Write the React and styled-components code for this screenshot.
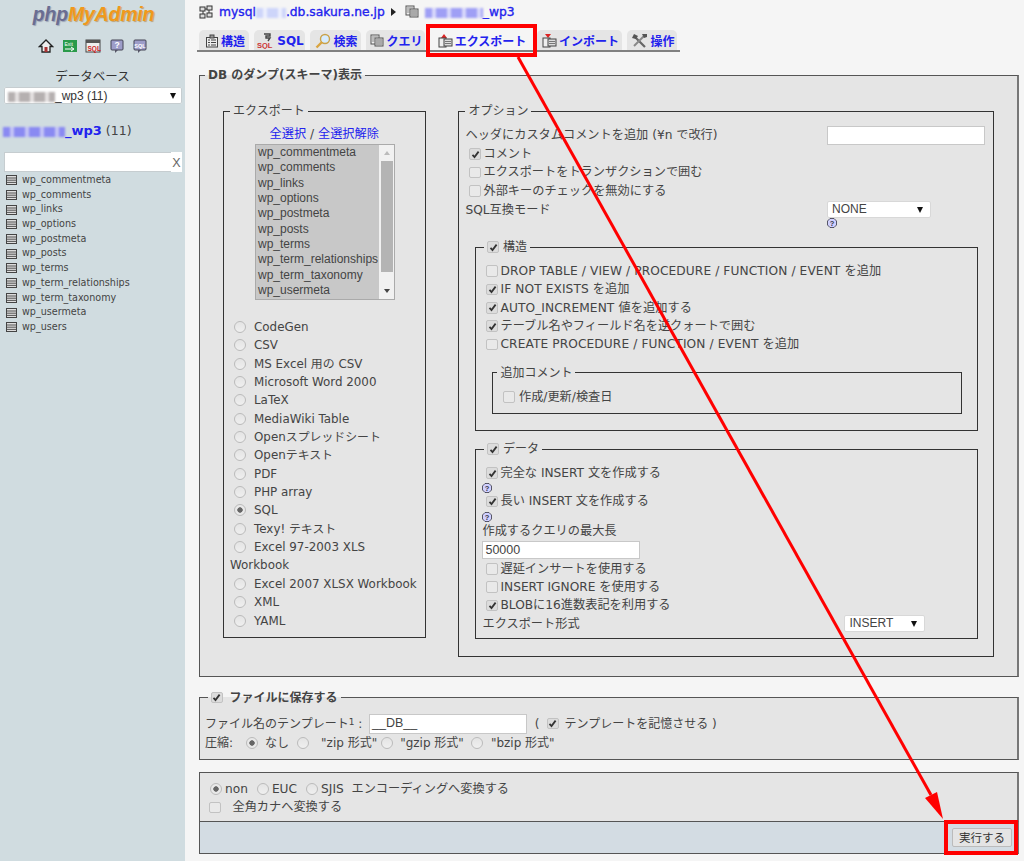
import React from 'react';
import styled, { createGlobalStyle, css } from 'styled-components';

const Global = createGlobalStyle`
  html, body { margin: 0; padding: 0; height: 861px; overflow: hidden; background: #f5f5f5; }
  * { box-sizing: border-box; }
  body { font-family: "DejaVu Sans", "Noto Sans CJK JP", sans-serif; font-size: 12.2px; color: #444; }
`;

const Page = styled.div`
  position: relative; width: 1024px; height: 861px; display: flex; overflow: hidden;
`;

/* ---------- sidebar ---------- */
const Sidebar = styled.aside`
  width: 185px; height: 861px; flex: none; background: #d0dce0; display: flex; flex-direction: column;
`;
const Logo = styled.div`
  height: 36px; padding: 1px 0 0 2px; text-align: center; font: italic bold 19.5px/26px "Liberation Sans", sans-serif;
  letter-spacing: -0.2px; color: #6a6d92; text-shadow: 1px 1px 1px #9aa3b5;
  b { color: #f0991c; font-weight: bold; text-shadow: 1px 1px 1px #b9a27a; }
`;
const NavIcons = styled.div`
  height: 18px; margin-top: 1px; display: flex; padding-left: 38px; gap: 7.5px; align-items: center;
`;
const DbLabel = styled.div`
  margin-top: 12px; text-align: center; font-size: 12.5px; line-height: 20px; color: #333;
`;
const SideSelect = styled.div`
  margin: 0 3px 0 4px; height: 17px; background: #fff; border-radius: 2px; box-shadow: 0 0 0 1px #c6cdd0 inset;
  display: flex; align-items: center; justify-content: space-between; color: #333; padding: 0 6px 0 4px;
  font-family: "Liberation Sans", sans-serif; font-size: 12px;
`;
const Mosaic = styled.span`
  display: inline-block; vertical-align: -2px; height: ${p => p.$h || 10}px; width: ${p => p.$w}px; filter: blur(1px);
  background: repeating-linear-gradient(90deg, ${p => p.$c} 0 7px, ${p => p.$d} 7px 11px, ${p => p.$c} 11px 15px);
`;
const DbHead = styled.div`
  margin: 17px 0 0 3px; height: 20px; line-height: 20px; font-size: 12.5px; color: #444;
  a { color: #2222ee; font-weight: bold; text-decoration: none; font-size: 13px; }
`;
const FilterRow = styled.div`
  margin: 11px 3px 0 4px; height: 20px; display: flex; background: #fff; box-shadow: 0 0 0 1px #c6cdd0 inset;
  span { margin-left: auto; width: 11px; background: #fff; color: #666; font: 12.5px/22px "Liberation Sans", sans-serif; text-align: center; }
`;
const SideList = styled.ul`
  list-style: none; margin: 1px 0 0; padding: 0 0 0 6px;
`;
const SideItem = styled.li`
  height: 14.7px; line-height: 14.7px; display: flex; align-items: center; gap: 5px; font-size: 9.6px; color: #444;
`;

/* ---------- main ---------- */
const Main = styled.main`
  flex: 1; min-width: 0; padding: 0 5px 0 14px; display: flex; flex-direction: column;
`;
const Crumbs = styled.div`
  height: 30px; padding-bottom: 6px; display: flex; align-items: center; gap: 6px; font-size: 12.3px; color: #2222ee;
  -webkit-text-stroke: .35px #2222ee;
`;
const TabBar = styled.nav`
  display: flex; gap: 5px; height: 22px; width: 483px; margin-left: -2px; padding-left: 2px; border-bottom: 2px solid #808080;
`;
const Tab = styled.a`
  height: 20px; width: ${p => p.$w}px; flex: none; display: flex; align-items: center; justify-content: center; gap: 2px; padding: 1px 0 0 2px;
  border-radius: 5px 5px 0 0; font-size: 12px; font-weight: bold; color: #2222ee; white-space: nowrap;
  background: ${p => p.$active ? '#f5f5f5' : '#e5e5e5'};
`;

const Field = styled.fieldset`
  margin: ${p => p.$m || '0'}; padding: ${p => p.$p || '0'}; min-width: 0; min-inline-size: 0;
  height: ${p => p.$h}px; ${p => p.$w && css`width: ${p.$w}px;`}
  border: 1px solid ${p => p.$dark ? '#333' : '#555'}; background: ${p => p.$bare ? 'transparent' : '#e5e5e5'};
  ${p => p.$edge && 'border-right: 2px solid #777;'}
`;
const Legend = styled.legend`
  margin-left: ${p => p.$ml ?? 6}px; padding: 0 3px; height: 18px; line-height: 18px; font-size: 12px; color: #444;
  font-weight: ${p => p.$bold ? 'bold' : 'normal'}; display: flex; align-items: center; gap: 4px; background: transparent;
`;
const Columns = styled.div`
  display: flex; gap: 32px; align-items: flex-start;
`;

const Links = styled.div`
  text-align: center; height: 20px; line-height: 20px; margin: 4px 0 0 -1px; font-size: 12.2px; color: #444;
  a { color: #2222ee; text-decoration: none; }
`;
const ListBox = styled.div`
  margin: 0 0 0 31px; width: 140px; height: 156px; border: 1px solid #aaa; display: flex; background: #c8c8c8;
`;
const ListOptions = styled.div`
  flex: 1; padding-left: 2px;
  div { height: 15.35px; font: 12px/15.35px "Liberation Sans", sans-serif; color: #444; white-space: nowrap; }
`;
const ScrollBar = styled.div`
  width: 15px; background: #f1f1f1; display: flex; flex-direction: column; align-items: center;
  i { display: block; width: 12px; height: 111px; background: #b4b4b4; }
`;
const Arrow = styled.span`
  height: 16px; display: flex; align-items: center; justify-content: center;
  ${p => !p.$up && 'margin-top: auto;'}
  &::before { content: ""; border-left: 3.5px solid transparent; border-right: 3.5px solid transparent;
    ${p => p.$up ? 'border-bottom: 4px solid #bbb;' : 'border-top: 4px solid #444;'} }
`;
const Formats = styled.div`
  margin-top: 18px; padding-left: 6px; width: 195px; font-size: 11.9px; line-height: 18.35px;
`;
const Radio = styled.span`
  display: inline-block; flex: none; width: 12px; height: 12px; border-radius: 50%; vertical-align: -2px;
  margin: ${p => p.$m || '0 8px 0 4px'};
  border: 1px solid #bbb; background: ${p => p.$on ? 'radial-gradient(circle, #666 0 2.4px, #e9e9e9 3px)' : 'linear-gradient(#e4e4e4, #efefef)'};
`;
const Box = styled.span`
  display: inline-flex; align-items: center; justify-content: center; flex: none; width: 11.5px; height: 11.5px;
  border: 1px solid #c2c2c2; border-radius: 2px; background: ${p => p.$on ? '#dcdcdc' : '#e9e9e9'}; margin: ${p => p.$m || '0'};
`;
const Row = styled.div`
  height: ${p => p.$h || 18.35}px; line-height: ${p => p.$h || 18.35}px; display: flex; align-items: center; white-space: nowrap;
  padding-left: ${p => p.$pl || 0}px; font-size: ${p => p.$fs || 12.2}px;
  ${p => p.$ls && css`letter-spacing: ${p.$ls}px;`}
  ${p => p.$mt && css`margin-top: ${p.$mt}px;`}
`;
const OptionsRow = styled(Row)`
  justify-content: space-between; padding-right: ${p => p.$pr ?? 8}px;
`;
const TextInput = styled.div`
  width: ${p => p.$w}px; height: ${p => p.$h || 19}px; background: #fff; border: 1px solid #c8c8c8; flex: none;
  color: #444; font: 12.5px/17px "Liberation Sans", sans-serif; padding-left: 2px; letter-spacing: 0;
  ${p => p.$mb && css`margin-bottom: ${p.$mb}px;`}
  ${p => p.$ml && css`margin-left: ${p.$ml}px;`}
`;
const Select = styled.div`
  width: ${p => p.$w}px; height: 17px; flex: none; background: #fff; border: 1px solid #d8d8d8; border-radius: 2px;
  color: #444; font: 12px/15px "Liberation Sans", sans-serif; padding: 0 7px 0 4px;
  display: flex; align-items: center; justify-content: space-between;
`;
const Caret = styled.i`
  border-left: 3.5px solid transparent; border-right: 3.5px solid transparent; border-top: 6px solid #111;
`;
const CrumbCaret = styled.i`
  border-top: 4px solid transparent; border-bottom: 4px solid transparent; border-left: 5px solid #222; margin-right: 3px;
`;
const SqlCompat = styled.div`
  display: flex; justify-content: space-between; height: 29px; padding-right: 62px; line-height: 20px; font-size: 12.2px;
`;
const SelectStack = styled.div`
  display: flex; flex-direction: column; padding-top: 1px;
`;
const Help = styled.svg`
  display: block; width: 10px; height: 10px; flex: none; margin: ${p => p.$m || '0'};
`;
const Sup = styled.sup`
  font-size: 9px; line-height: 0; margin-bottom: 4px;
`;
const EncodingBox = styled.div`
  margin-top: 12.5px; height: 50px; border: 1px solid #555; border-right: 2px solid #777; background: #e5e5e5; padding: 7px 0 0 9px;
`;
const ActionBar = styled.div`
  height: 32px; background: #d3dce3; border: 1px solid #555; border-top: 0; border-right: 2px solid #777; display: flex; justify-content: flex-end; align-items: center; padding-right: 5px;
`;
const Go = styled.button`
  width: 60px; height: 19px; padding: 0; font: 11.5px/17px "Noto Sans CJK JP", sans-serif; color: #333;
  background: #e4e4e4; border: 1px solid #bbb; border-radius: 2px;
`;

/* annotation overlays */
const Callout = styled.div`
  position: absolute; left: ${p => p.$x}px; top: ${p => p.$y}px; width: ${p => p.$w}px; height: ${p => p.$h}px; border: 4px solid #f00;
`;
const ArrowOverlay = styled.svg`
  position: absolute; left: 0; top: 0; pointer-events: none;
`;

const Check = ({ on = true, m }) => (
  <Box $on={on} $m={m}>{on && (
    <svg width="9" height="9" viewBox="0 0 9 9"><path d="M1.5 4.8 3.5 7 7.6 1.6" fill="none" stroke="#333" strokeWidth="1.8" /></svg>
  )}</Box>
);
const HelpIcon = ({ m }) => (
  <Help viewBox="0 0 10 10" $m={m}>
    <path d="M3 .5h4L9.5 3v4L7 9.5H3L.5 7V3z" fill="#d0d0ff" stroke="#334" strokeWidth=".8" />
    <text x="5" y="8" fontSize="7.500" fontWeight="bold" textAnchor="middle" fill="#334" fontFamily="Liberation Sans">?</text>
  </Help>
);
const DbIcon = ({ s = 14 }) => (
  <svg width={s} height={s} viewBox="0 0 14 14">
    <rect x="1" y="1" width="8" height="9" fill="#eee" stroke="#555" />
    <rect x="5" y="4" width="8" height="8" fill="#ddd" stroke="#555" />
    <path d="M6 6h6M6 8h6M6 10h6" stroke="#777" />
    <path d="M2 3h6M2 5h3M2 7h3" stroke="#888" />
  </svg>
);
const ServerIcon = () => (
  <svg width="14" height="14" viewBox="0 0 14 14">
    <rect x="1" y="2" width="5" height="4" fill="#ddd" stroke="#333" /><rect x="8" y="1" width="5" height="4" fill="#ddd" stroke="#333" />
    <rect x="1" y="9" width="5" height="4" fill="#ddd" stroke="#333" /><rect x="8" y="8" width="5" height="4" fill="#ddd" stroke="#333" />
    <path d="M6 4h2M4 6v3M10 5v3" stroke="#333" />
  </svg>
);
const TableIcon = () => (
  <svg width="11" height="10" viewBox="0 0 11 10">
    <rect x=".5" y=".5" width="10" height="9" fill="#ddd" stroke="#444" />
    <path d="M1 3h9M1 5.2h9M1 7.4h9" stroke="#444" strokeWidth=".9" />
  </svg>
);
const TabIcon = ({ kind }) => {
  if (kind === 'struct') return (
    <svg width="14" height="14" viewBox="0 0 14 14"><rect x="1.5" y="3.5" width="11" height="9.5" fill="#eee" stroke="#444" /><path d="M3 6h2M3 8.500h2M3 11h2M6 6h5M6 8.500h5M6 11h5" stroke="#444" /><rect x="5" y="1" width="4" height="3" fill="#999" stroke="#444" /></svg>
  );
  if (kind === 'sql') return (
    <svg width="18" height="16" viewBox="0 0 18 16"><path d="M7 1h6v2H9v2h4l-2 3" fill="none" stroke="#444" strokeWidth="1.4" /><text x="0" y="15" fontSize="7.500" fontWeight="bold" fill="#c33" fontFamily="Liberation Sans">SQL</text></svg>
  );
  if (kind === 'search') return (
    <svg width="16" height="16" viewBox="0 0 16 16"><circle cx="10" cy="6" r="4.500" fill="#d6ecff" stroke="#c9a24a" strokeWidth="1.4" /><path d="M7 9 1.500 14.500" stroke="#d9a441" strokeWidth="2.400" /></svg>
  );
  if (kind === 'export' || kind === 'import') return (
    <svg width="15" height="15" viewBox="0 0 15 15">
      <path d={kind === 'export' ? 'M3 5 6 1l3 4z' : 'M3 1h6L6 5z'} fill="#d22" />
      <rect x="1" y="5" width="7" height="9" fill="#eee" stroke="#444" /><rect x="6" y="6" width="8" height="7" fill="#ddd" stroke="#444" /><path d="M7 8.500h6M7 10.500h6" stroke="#777" />
    </svg>
  );
  if (kind === 'ops') return (
    <svg width="17" height="16" viewBox="0 0 17 16"><path d="M3 3l11 11" stroke="#666" strokeWidth="2.200" /><path d="M13 3 3 13" stroke="#888" strokeWidth="2" /><path d="M1 5l2-4 4 2-2 3zM11 1h5v3l-3 1z" fill="#555" /></svg>
  );
  return <DbIcon />;
};

const tables = ['wp_commentmeta', 'wp_comments', 'wp_links', 'wp_options', 'wp_postmeta', 'wp_posts', 'wp_terms', 'wp_term_relationships', 'wp_term_taxonomy', 'wp_usermeta'];
const sideTables = [...tables, 'wp_users'];
const tabs = [
  { k: 'struct', t: '構造', w: 50 }, { k: 'sql', t: 'SQL', w: 51 }, { k: 'search', t: '検索', w: 51 }, { k: 'query', t: 'クエリ', w: 59 },
  { k: 'export', t: 'エクスポート', w: 102, active: true }, { k: 'import', t: 'インポート', w: 85 }, { k: 'ops', t: '操作', w: 50 },
];
const formats = ['CodeGen', 'CSV', 'MS Excel 用の CSV', 'Microsoft Word 2000', 'LaTeX', 'MediaWiki Table', 'Openスプレッドシート', 'Openテキスト', 'PDF', 'PHP array', 'SQL', 'Texy! テキスト', 'Excel 97-2003 XLS Workbook', 'Excel 2007 XLSX Workbook', 'XML', 'YAML'];

const NavIcon = ({ children }) => <svg width="16" height="16" viewBox="0 0 16 16">{children}</svg>;
const tick = '0 2.5px 0 0';

export default function App() {
  return (
    <Page>
      <Global />
      <Sidebar>
        <Logo>php<b>MyAdmin</b></Logo>
        <NavIcons>
          <NavIcon><path d="M8 2 1.500 8.500H4V14h8V8.500h2.500z" fill="#eee" stroke="#222" strokeWidth="1.300" /><rect x="6.500" y="9" width="3" height="5" fill="#a33" /></NavIcon>
          <NavIcon><rect x="1" y="2" width="14" height="12" fill="#2a9a4a" /><path d="M3 11h8M9 9l3 2-3 2" stroke="#fff" fill="none" /><text x="2.500" y="7.500" fontSize="5" fill="#fff" fontFamily="Liberation Sans">Exit</text></NavIcon>
          <NavIcon><rect x="1" y="2" width="14" height="12" fill="#eee" stroke="#444" /><rect x="1" y="2" width="14" height="3" fill="#555" /><text x="2.500" y="12.500" fontSize="6.500" fontWeight="bold" fill="#c22" fontFamily="Liberation Sans">SQL</text></NavIcon>
          <NavIcon><rect x="2" y="2" width="12" height="10" rx="1" fill="#9d9dc9" stroke="#445" /><path d="M6 12v3l3-3z" fill="#556" /><text x="8" y="10" fontSize="8.500" fontWeight="bold" textAnchor="middle" fill="#fff" fontFamily="Liberation Sans">?</text></NavIcon>
          <NavIcon><rect x="2" y="2" width="12" height="10" rx="1" fill="#9d9dc9" stroke="#445" /><path d="M6 12v3l3-3z" fill="#556" /><text x="8" y="9.500" fontSize="5.500" fontWeight="bold" textAnchor="middle" fill="#fff" fontFamily="Liberation Sans">SQL</text></NavIcon>
        </NavIcons>
        <DbLabel>データベース</DbLabel>
        <SideSelect><span><Mosaic $w={47} $c="#b5b0b0" $d="#e5e1e1" />_wp3 (11)</span><Caret /></SideSelect>
        <DbHead><a href="#"><Mosaic $w={62} $c="#8a8af2" $d="#c4c4f5" />_wp3</a> (11)</DbHead>
        <FilterRow><span>X</span></FilterRow>
        <SideList>
          {sideTables.map((t) => <SideItem key={t}><TableIcon />{t}</SideItem>)}
        </SideList>
      </Sidebar>

      <Main>
        <Crumbs>
          <ServerIcon />
          <span>mysql<Mosaic $w={30} $c="#cdd5fa" $d="#eceffd" />.db.sakura.ne.jp</span>
          <CrumbCaret />
          <DbIcon />
          <span><Mosaic $w={58} $c="#9f9ff5" $d="#d8d8fa" />_wp3</span>
        </Crumbs>
        <TabBar>
          {tabs.map((t) => <Tab key={t.k} $w={t.w} $active={t.active}><TabIcon kind={t.k} />{t.t}</Tab>)}
        </TabBar>

        <Field $m="14px 0 0" $h={611} $p="18px 23px 0" $edge>
          <Legend $ml={-18} $bold>DB のダンプ(スキーマ)表示</Legend>
          <Columns>
            <Field $h={536} $w={204} $dark>
              <Legend>エクスポート</Legend>
              <Links><a href="#">全選択</a> / <a href="#">全選択解除</a></Links>
              <ListBox>
                <ListOptions>{tables.map((t) => <div key={t}>{t}</div>)}</ListOptions>
                <ScrollBar><Arrow $up /><i /><Arrow /></ScrollBar>
              </ListBox>
              <Formats>
                {formats.map((f) => <React.Fragment key={f}><Radio $on={f === 'SQL'} />{f}<br /></React.Fragment>)}
              </Formats>
            </Field>

            <Field $h={555} $w={537} $p="6px 0 0 6px" $dark>
              <Legend $ml={0}>オプション</Legend>
              <OptionsRow $h={19}>ヘッダにカスタムコメントを追加 (¥n で改行)<TextInput $w={158} /></OptionsRow>
              <Row $pl={4}><Check m={tick} />コメント</Row>
              <Row $pl={4}><Check on={false} m={tick} />エクスポートをトランザクションで囲む</Row>
              <Row $pl={4}><Check on={false} m={tick} />外部キーのチェックを無効にする</Row>
              <SqlCompat>SQL互換モード
                <SelectStack><Select $w={104}>NONE<Caret /></Select><HelpIcon /></SelectStack>
              </SqlCompat>

              <Field $m="9px 0 0 10px" $h={193} $w={503} $p="6px 0 0 10px" $dark $bare>
                <Legend $ml={-2}><Check />構造</Legend>
                <Row $ls={.1}><Check on={false} m={tick} />DROP TABLE / VIEW / PROCEDURE / FUNCTION / EVENT を追加</Row>
                <Row $ls={.1}><Check m={tick} />IF NOT EXISTS を追加</Row>
                <Row $ls={.1}><Check m={tick} />AUTO_INCREMENT 値を追加する</Row>
                <Row><Check m={tick} />テーブル名やフィールド名を逆クォートで囲む</Row>
                <Row $ls={.1}><Check on={false} m={tick} />CREATE PROCEDURE / FUNCTION / EVENT を追加</Row>
                <Field $m="10px 0 0 6px" $h={50} $w={470} $p="6px 0 0 10px" $dark $bare>
                  <Legend $ml={-6}>追加コメント</Legend>
                  <Row><Check on={false} m="0 4px 0 0" />作成/更新/検査日</Row>
                </Field>
              </Field>

              <Field $m="9px 0 0 10px" $h={199} $w={503} $p="6px 0 0 6px" $dark $bare>
                <Legend $ml={2}><Check />データ</Legend>
                <Row $pl={4}><Check m={tick} />完全な INSERT 文を作成する</Row>
                <HelpIcon m="1px 0 -1px" />
                <Row $pl={4}><Check m={tick} />長い INSERT 文を作成する</Row>
                <HelpIcon m="1px 0 -1px" />
                <Row $h={20}>作成するクエリの最大長</Row>
                <TextInput $w={158} $h={18} $mb={1}>50000</TextInput>
                <Row $pl={4}><Check on={false} m={tick} />遅延インサートを使用する</Row>
                <Row $pl={4}><Check on={false} m={tick} />INSERT IGNORE を使用する</Row>
                <Row $pl={4}><Check m={tick} />BLOBに16進数表記を利用する</Row>
                <OptionsRow $h={18} $pr={52}>エクスポート形式<Select $w={81}>INSERT<Caret /></Select></OptionsRow>
              </Field>
            </Field>
          </Columns>
        </Field>

        <Field $m="11.500px 0 0" $h={71} $p="0 0 0 5px" $edge>
          <Legend $ml={3} $bold><Check m="0 3px 0 0" />ファイルに保存する</Legend>
          <Row $h={20} $mt={7} $fs={12}>ファイル名のテンプレート<Sup>1</Sup>&nbsp;:&nbsp;<TextInput $w={158} $h={20} $ml={3}>__DB__</TextInput>&nbsp;&nbsp;(&nbsp;&nbsp;<Check m="0 6px 0 0" />テンプレートを記憶させる )</Row>
          <Row $h={18} $fs={12}>圧縮:<Radio $on $m="0 7px 0 13px" />なし<Radio $m="0 12px 0 8px" />"zip 形式"<Radio $m="0 7px 0 4px" />"gzip 形式"<Radio $m="0 8px 0 7px" />"bzip 形式"</Row>
        </Field>

        <EncodingBox>
          <Row><Radio $on $m="0 3px 0 1px" />non<Radio $m="0 3px 0 9px" />EUC<Radio $m="0 3px 0 9px" />SJIS&nbsp;&nbsp;エンコーディングへ変換する</Row>
          <Row><Check on={false} m="0 12px 0 0" />全角カナへ変換する</Row>
        </EncodingBox>
        <ActionBar><Go>実行する</Go></ActionBar>
      </Main>

      <Callout $x={426} $y={24} $w={111} $h={33} />
      <Callout $x={944} $y={820} $w={74} $h={35} />
      <ArrowOverlay width="1024" height="861" viewBox="0 0 1024 861">
        <path d="M518 57 931 795" stroke="#f00" strokeWidth="3" fill="none" />
        <path d="M943 819 925 798 937 792z" fill="#f00" />
      </ArrowOverlay>
    </Page>
  );
}
